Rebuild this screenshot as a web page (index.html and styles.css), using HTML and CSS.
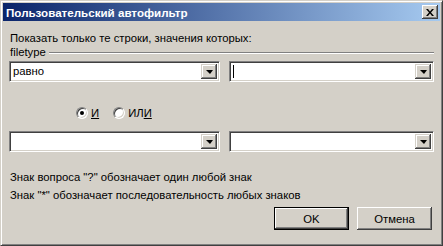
FILE: index.html
```html
<!DOCTYPE html>
<html>
<head>
<meta charset="utf-8">
<link rel="stylesheet" href="styles.css">
</head>
<body>
<div class="window">
  <div class="titlebar">
    <span class="title">Пользовательский автофильтр</span>
    <span class="close"><svg width="8" height="7" viewBox="0 0 8 7"><path d="M0 0h2l2 2.5L6 0h2L5 3.5 8 7H6L4 4.5 2 7H0l3-3.5z" fill="#000"/></svg></span>
  </div>
  <div class="content">
    <div class="label">Показать только те строки, значения которых:</div>
    <div class="group"><span>filetype</span><span class="etch"></span></div>
    <div class="row first">
      <div class="combo left"><span class="val">равно</span><span class="btn"><i></i></span></div>
      <div class="combo right"><span class="val caret"></span><span class="btn"><i></i></span></div>
    </div>
    <div class="radios">
      <label class="radio"><span class="dot on"></span><span><u>И</u></span></label>
      <label class="radio"><span class="dot"></span><span>ИЛ<u>И</u></span></label>
    </div>
    <div class="row second">
      <div class="combo left"><span class="val"></span><span class="btn"><i></i></span></div>
      <div class="combo right"><span class="val"></span><span class="btn"><i></i></span></div>
    </div>
    <div class="hints">
      <div>Знак вопроса "?" обозначает один любой знак</div>
      <div>Знак "*" обозначает последовательность любых знаков</div>
    </div>
    <div class="buttons">
      <div class="button default"><span>OK</span></div>
      <div class="button"><span>Отмена</span></div>
    </div>
  </div>
</div>
</body>
</html>
```
FILE: styles.css
```css
* { box-sizing: border-box; }
html, body { margin: 0; padding: 0; }
body {
  width: 443px; height: 246px; overflow: hidden;
  font-family: "Liberation Sans", Arial, sans-serif; font-size: 11.3px; color: #000;
  background: #d4d0c8;
}
.window {
  width: 443px; height: 246px;
  background: #d4d0c8;
  border: 1px solid; border-color: #d4d0c8 #404040 #404040 #d4d0c8;
  box-shadow: inset 1px 1px 0 #fff, inset -1px -1px 0 #808080;
  padding: 2px;
  display: flex; flex-direction: column;
}
.titlebar {
  height: 18px;
  background: linear-gradient(to right, #0a246a, #a6caf0);
  display: flex; align-items: center; justify-content: space-between;
  padding: 0 2px 0 3px;
}
.title { color: #fff; font-weight: bold; font-size: 11.6px; }
.close {
  width: 16px; height: 14px; background: #d4d0c8;
  box-shadow: inset -1px -1px 0 #404040, inset 1px 1px 0 #fff, inset -2px -2px 0 #808080;
  display: flex; align-items: center; justify-content: center;
}
.content { padding: 10px 6px 0 6px; display: flex; flex-direction: column; flex: 1; }
.label { height: 14px; line-height: 14px; margin-left: 1px; }
.group { display: flex; align-items: center; height: 14px; margin-left: 1px; }
.etch { flex: 1; height: 2px; border-top: 1px solid #808080; border-bottom: 1px solid #fff; margin-left: 3px; margin-top: 2px; }
.row { display: flex; justify-content: space-between; }
.row.first { margin-top: 2px; }
.row.second { margin-top: 11px; }
.combo {
  height: 21px; background: #fff;
  border: 1px solid; border-color: #808080 #fff #fff #808080;
  box-shadow: inset 1px 1px 0 #404040, inset -1px -1px 0 #d4d0c8;
  display: flex; padding: 2px;
}
.combo.left { width: 211px; }
.combo.right { width: 205px; }
.val { flex: 1; line-height: 15px; padding-left: 1px; }
.caret { border-left: 1px solid #000; margin: 1px 0 1px 1px; flex: 1; }
.btn {
  width: 16px; height: 15px; background: #d4d0c8;
  box-shadow: inset -1px -1px 0 #404040, inset 1px 1px 0 #d4d0c8, inset -2px -2px 0 #808080, inset 2px 2px 0 #fff;
  display: flex; align-items: center; justify-content: center;
}
.btn i { width: 0; height: 0; border-left: 4px solid transparent; border-right: 3px solid transparent; border-top: 4px solid #000; margin-left: 1px; }
.radios { display: flex; margin: 24px 0 0 67px; gap: 14px; height: 14px; align-items: center; }
.radio { display: flex; align-items: center; gap: 3px; }
.dot {
  width: 12px; height: 12px; border-radius: 50%; background: #fff;
  border: 1px solid; border-color: #808080 #fff #fff #808080;
  box-shadow: inset 1px 1px 0 #404040, inset -1px -1px 0 #d4d0c8;
  display: flex; align-items: center; justify-content: center;
}
.dot.on::after { content: ""; width: 4px; height: 4px; border-radius: 50%; background: #000; }
.hints { margin-top: 16px; margin-left: 1px; line-height: 18px; }
.buttons { display: flex; justify-content: flex-end; gap: 8px; margin-top: 3px; margin-right: 2px; }
.button {
  width: 75px; height: 23px; background: #d4d0c8;
  box-shadow: inset -1px -1px 0 #404040, inset 1px 1px 0 #fff, inset -2px -2px 0 #808080;
  display: flex; align-items: center; justify-content: center;
}
.button.default {
  border: 1px solid #000;
  box-shadow: inset -1px -1px 0 #404040, inset 1px 1px 0 #fff, inset -2px -2px 0 #808080;
}
```
